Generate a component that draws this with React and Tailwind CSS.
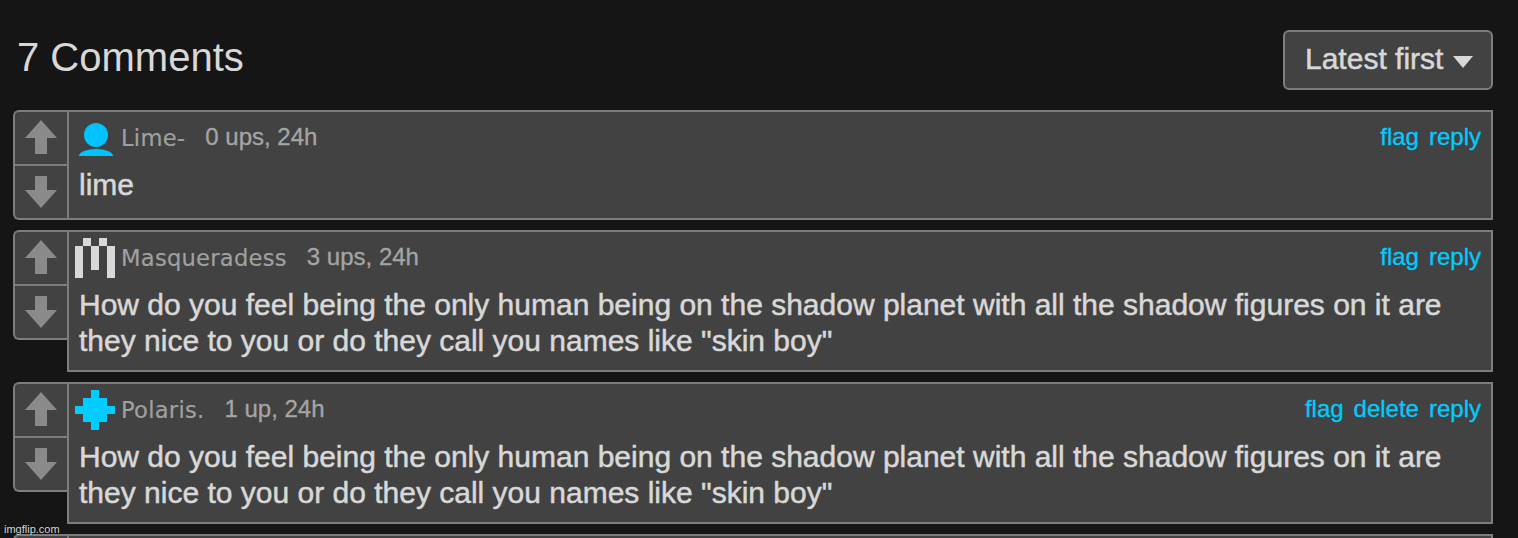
import React from "react";

/* ================= DATA ================= */

const QUESTION =
  'How do you feel being the only human being on the shadow planet with all the shadow figures on it are they nice to you or do they call you names like "skin boy"';

const comments = [
  {
    id: 1,
    user: "Lime-",
    icon: "user",
    meta: "0 ups, 24h",
    actions: ["flag", "reply"],
    text: "lime",
  },
  {
    id: 2,
    user: "Masqueradess",
    icon: "crown",
    meta: "3 ups, 24h",
    actions: ["flag", "reply"],
    text: QUESTION,
  },
  {
    id: 3,
    user: "Polaris.",
    icon: "star",
    meta: "1 up, 24h",
    actions: ["flag", "delete", "reply"],
    text: QUESTION,
  },
];

/* ================= ICONS ================= */

function UserIcon({ type }) {
  return (
    <svg
      viewBox="0 0 40 40"
      className="h-10 w-10 shrink-0"
      shapeRendering={type === "user" ? "auto" : "crispEdges"}
    >
      {type === "user" && (
        <g fill="#00c3ff">
          <circle cx="21" cy="17" r="12" />
          <path d="M4 38A17 7 0 0 1 38 38Z" />
        </g>
      )}
      {type === "crown" && (
        <path
          fill="#d8d8d8"
          d="M0 8H8V0H16V8H24V0H32V8H40V40H32V8H24V32H16V8H8V40H0Z"
        />
      )}
      {type === "star" && (
        <path
          fill="#00ccff"
          d="M16 0H24V8H32V16H40V24H32V32H24V40H16V32H8V24H0V16H8V8H16Z"
        />
      )}
    </svg>
  );
}

function VoteArrow({ down }) {
  return (
    <svg viewBox="0 0 52 52" className="h-[52px] w-[52px]" fill="#8a8a8a">
      {down ? (
        <path d="M20 10H32V24H42L26 42L10 24H20Z" />
      ) : (
        <path d="M26 8L42 26H32V42H20V26H10Z" />
      )}
    </svg>
  );
}

/* ================= COMMENT ================= */

function VoteBox() {
  return (
    <div className="h-[110px] w-[54px] shrink-0 rounded-l-md border-2 border-r-0 border-[#7d7d7d] bg-[#424242]">
      <button className="block h-[52px]">
        <VoteArrow />
      </button>
      <button className="block h-[54px] w-full border-t-2 border-[#7d7d7d]">
        <VoteArrow down />
      </button>
    </div>
  );
}

function Comment({ comment }) {
  return (
    <div className="flex items-start">
      <VoteBox />
      <div className="min-h-[110px] min-w-0 flex-1 border-2 border-[#7d7d7d] bg-[#424242] pb-[11px]">
        <div className="flex h-[55px] items-start pt-[6px] pr-[10px] pl-[6px] text-2xl leading-[38px] [-webkit-text-stroke:0.3px]">
          <UserIcon type={comment.icon} />
          <span className="mt-px ml-[6px] font-['DejaVu_Sans',sans-serif] text-[22.6px] tracking-[0.27px] text-[#a0a0a0] [-webkit-text-stroke:0.2px]">
            {comment.user}
          </span>
          <span className="ml-5 text-[#a5a5a5]">{comment.meta}</span>
          <div className="ml-auto flex gap-[10px] text-[#00ccff]">
            {comment.actions.map((a) => (
              <button key={a}>{a}</button>
            ))}
          </div>
        </div>
        <p className="pr-[10px] pl-[10px] text-[30px] leading-9 text-[#d8d8d8] [-webkit-text-stroke:0.5px]">
          {comment.text}
        </p>
      </div>
    </div>
  );
}

/* ================= PAGE ================= */

export default function App() {
  return (
    <div className="relative h-[538px] w-[1518px] overflow-hidden bg-[#151515] pt-[30px] pr-[25px] pl-[13px] font-['Liberation_Sans',Arial,sans-serif]">
      {/* ===== HEADER ===== */}
      <div className="flex h-20 items-start justify-between">
        <h2 className="pl-1 text-[40px] leading-[54px] text-[#d8d8d8]">
          7 Comments
        </h2>
        <button className="flex h-[60px] w-[210px] items-center rounded-md border-2 border-[#7d7d7d] bg-[#424242] pb-[3px] pl-5 text-[30px] text-[#d8d8d8] [-webkit-text-stroke:0.5px]">
          Latest first
          <svg viewBox="0 0 20 12" className="mt-[7px] ml-[10px] h-3 w-5" fill="currentColor">
            <path d="M0 0H20L10 12Z" />
          </svg>
        </button>
      </div>

      {/* ===== LIST ===== */}
      <div className="space-y-[10px]">
        {comments.map((c) => (
          <Comment key={c.id} comment={c} />
        ))}
        {/* next comment, cut off by the bottom edge */}
        <div className="flex items-start">
          <VoteBox />
          <div className="h-[110px] flex-1 border-2 border-[#7d7d7d] bg-[#424242]" />
        </div>
      </div>

      <span className="absolute bottom-[2px] left-1 text-[11px] leading-[13px] text-[#d8d8d8] [text-shadow:0_0_2px_#000]">
        imgflip.com
      </span>
    </div>
  );
}
